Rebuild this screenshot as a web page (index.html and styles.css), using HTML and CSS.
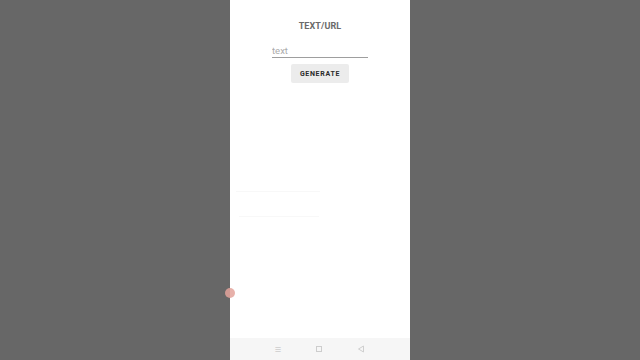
FILE: index.html
```html
<!DOCTYPE html>
<html lang="en">
<head>
  <meta charset="UTF-8" />
  <title>QR Generator</title>
  <link rel="stylesheet" href="styles.css">
</head>
<body>
  <div class="phone">
    <div class="screen">
      <h1 class="title">TEXT/URL</h1>
      <input class="field" type="text" placeholder="text">
      <button class="gen-btn">GENERATE</button>

      <!-- restos casi invisibles -->
      <div class="ghost g1"></div>
      <div class="ghost g2"></div>
    </div>
    <div class="navbar">
      <span class="nav-ico">&#8801;</span>
      <span class="nav-sq"></span>
      <svg class="nav-back" width="8" height="8" viewBox="0 0 8 8"><path d="M6.5 1 L1.5 4 L6.5 7 Z" fill="none" stroke="#cfcfcf" stroke-width="1"/></svg>
    </div>
    <span class="touch-dot"></span>
  </div>
</body>
</html>
```

FILE: styles.css
```css
*{margin:0;padding:0;box-sizing:border-box}

body{
  background:#676767;
  width:640px;height:360px;overflow:hidden;
  display:flex;justify-content:center;
  font-family:Roboto,'Noto Sans',sans-serif
}

.phone{
  width:180px;height:360px;background:#fff;
  display:flex;flex-direction:column;position:relative
}

.screen{
  flex:1;display:flex;flex-direction:column;align-items:center;
  padding-top:21px
}

.title{
  font-size:9px;font-weight:700;color:#6a6a6a;letter-spacing:.1px;
  margin-bottom:12px
}

.field{
  width:96px;height:15px;border:none;border-bottom:1px solid #9e9e9e;
  font-family:inherit;font-size:9.5px;color:#333;outline:none;
  background:transparent;padding:0;margin-bottom:6px
}
.field::placeholder{color:#ababab}

.gen-btn{
  width:58px;height:19px;border:none;border-radius:2px;background:#ececec;
  font-family:inherit;font-size:7px;font-weight:700;letter-spacing:.7px;color:#2a2a2a
}

.ghost{align-self:flex-start;height:1px;background:#f8f8f8;width:84px;margin-left:6px}
.g1{margin-top:108px}
.g2{margin-top:24px;margin-left:9px;width:80px}

.navbar{
  height:22px;background:#f6f6f6;
  display:flex;justify-content:center;align-items:center;gap:35px
}
.nav-ico{font-size:11px;color:#cdcdcd;line-height:1}
.nav-sq{width:6px;height:6px;border:1px solid #cdcdcd}

.touch-dot{
  position:absolute;left:-5px;top:288px;width:10px;height:10px;border-radius:50%;
  background:#e3a39b;opacity:.85
}
```
